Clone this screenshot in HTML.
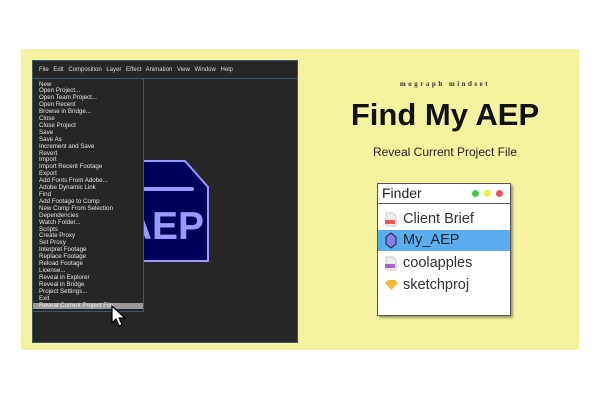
<!DOCTYPE html>
<html><head><style>
*{margin:0;padding:0;box-sizing:border-box}
body{width:600px;height:400px;background:#fff;position:relative;overflow:hidden;font-family:"Liberation Sans",sans-serif}
.y{position:absolute;left:21px;top:49px;width:558px;height:301px;background:#f4f3a0}
.panel{position:absolute;left:32px;top:60px;width:266px;height:283px;background:#262626;border:1px solid #3c5872}
.mb{position:absolute;left:0;top:0;width:264px;height:18px;border-bottom:1px solid #3c5872;color:#ddd;font-size:6px;line-height:18px;padding-left:6px;word-spacing:3px}
.menu{position:absolute;left:0;top:18px;width:111px;height:233px;background:#262626;border-right:1px solid #3c5872;border-bottom:1px solid #3c5872;color:#e6e6e6;font-size:6.2px;line-height:6.9px;padding:2.5px 0 0 6px}
.menu .h{background:#9a9a9a;margin-left:-6px;padding-left:6px;color:#eee}
.t1{position:absolute;left:330px;top:80px;width:230px;text-align:center;font-family:"Liberation Serif",serif;font-weight:bold;font-size:7px;letter-spacing:2.5px;color:#333}
.t2{position:absolute;left:330px;top:97px;width:230px;text-align:center;font-weight:bold;font-size:31px;color:#111}
.t3{position:absolute;left:330px;top:145px;width:230px;text-align:center;font-size:12px;color:#222}
.f{position:absolute;left:377px;top:183px;width:134px;height:133px;background:#fff;border:1px solid #555;box-shadow:2px 2px 2px rgba(0,0,0,.35)}
.ft{height:20px;border-bottom:1px solid #555;font-size:14px;line-height:19px;padding-left:4px;color:#222;position:relative}
.row{position:absolute;left:0;width:132px;height:21px;font-size:14.5px;line-height:21px;padding-left:25px;color:#333}
.dot{position:absolute;top:6px;width:7px;height:7px;border-radius:50%}
</style></head><body>
<div class="y"></div>
<div class="panel">
<svg style="position:absolute;left:0;top:0" width="266" height="283">
<path d="M75 100 H152 L175 126 V200 H75 Z" fill="#00005b" stroke="#9999ff" stroke-width="2" stroke-linejoin="round"/>
<rect x="85" y="126" width="76" height="4" rx="2" fill="#9999ff"/>
<text x="171" y="178" text-anchor="end" font-family="Liberation Sans" font-weight="bold" font-size="39" fill="#9999ff">AEP</text>
</svg>
<div class="mb">File Edit Composition Layer Effect Animation View Window Help</div>
<div class="menu">New<br>Open Project...<br>Open Team Project...<br>Open Recent<br>Browse in Bridge...<br>Close<br>Close Project<br>Save<br>Save As<br>Increment and Save<br>Revert<br>Import<br>Import Recent Footage<br>Export<br>Add Fonts From Adobe...<br>Adobe Dynamic Link<br>Find<br>Add Footage to Comp<br>New Comp From Selection<br>Dependencies<br>Watch Folder...<br>Scripts<br>Create Proxy<br>Set Proxy<br>Interpret Footage<br>Replace Footage<br>Reload Footage<br>License...<br>Reveal in Explorer<br>Reveal in Bridge<br>Project Settings...<br>Exit<div class="h">Reveal Current Project File</div></div>
</div>
<svg style="position:absolute;left:110px;top:305px" width="20" height="24"><path d="M2 1 v17 l4-4 3 7 3-1.5 -3-6.5 h6 z" fill="#fff" stroke="#000" stroke-width="1.2"/></svg>
<div class="t1">mograph mindset</div>
<div class="t2">Find My AEP</div>
<div class="t3">Reveal Current Project File</div>
<div class="f">
<div class="ft">Finder
<div class="dot" style="left:94px;background:#4c4"></div><div class="dot" style="left:106px;background:#ee4"></div><div class="dot" style="left:118px;background:#e55"></div></div>
<div class="row" style="top:25px">Client Brief<svg style="position:absolute;left:7px;top:3px" width="12" height="15"><path d="M1 1h7l3 3v10H1z" fill="#eee" stroke="#ccc"/><rect x="0" y="8" width="10" height="4" fill="#e55"/></svg></div>
<div class="row" style="top:46px;background:#5aaef0;color:#222">My_AEP<svg style="position:absolute;left:7px;top:2px" width="12" height="17"><path d="M6 1 L11 5 V12 L6 16 L1 12 V5 Z" fill="#8a7de8" stroke="#223" stroke-width="1"/></svg></div>
<div class="row" style="top:69px">coolapples<svg style="position:absolute;left:7px;top:3px" width="12" height="15"><path d="M1 1h7l3 3v10H1z" fill="#eee" stroke="#ccc"/><rect x="0" y="8" width="10" height="4" fill="#a6c"/></svg></div>
<div class="row" style="top:91px">sketchproj<svg style="position:absolute;left:7px;top:4px" width="13" height="12"><path d="M3 1h7l3 3-6.5 7L0 4z" fill="#f6b93b"/></svg></div>
</div>
</body></html>
